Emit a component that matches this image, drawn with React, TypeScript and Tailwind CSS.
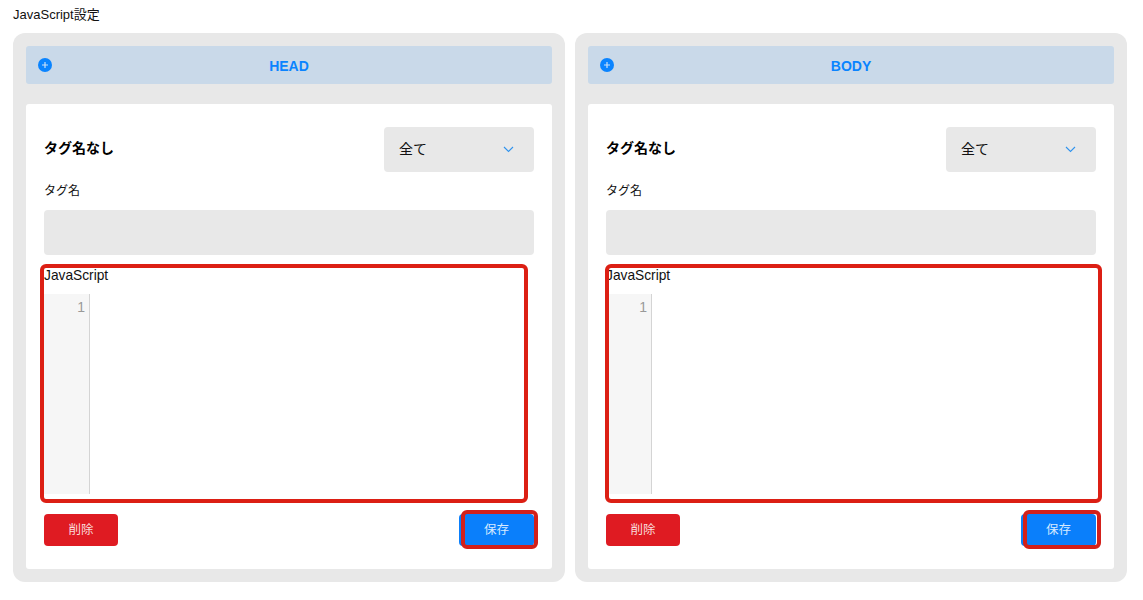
import React from 'react';

const font = { fontFamily: '"Liberation Sans", "Noto Sans CJK JP", sans-serif' };

const Panel = ({ title, codeBoxClass, saveBoxClass }: { title: string; codeBoxClass: string; saveBoxClass: string }) => {
  return (
    <section className="w-[552px] h-[549px] bg-[#e8e8e8] rounded-[12px] px-[13px] pt-[13px]">
      {/* Accordion header */}
      <div className="relative h-[38px] bg-[#c9d9e9] rounded-[3px] flex items-center justify-center">
        <span className="absolute left-[12px] top-[12px] w-[14px] h-[14px] rounded-full bg-[#0a84ff] flex items-center justify-center">
          <svg width="8" height="8" viewBox="0 0 8 8">
            <path d="M4 1v6M1 4h6" stroke="#c9e0f7" strokeWidth="1.2" />
          </svg>
        </span>
        <span className="text-[14px] font-bold text-[#0a84ff] pt-[2px]">{title}</span>
      </div>

      <div className="relative mt-[20px] h-[465px] bg-white rounded-[3px] px-[18px] pt-[23px]">
        <div className="flex items-center justify-between">
          <h2 className="text-[14px] font-bold text-black pb-[2px]">タグ名なし</h2>
          <div className="w-[150px] h-[45px] bg-[#e8e8e8] rounded-[4px] pl-[15px] pr-[20px] flex items-center justify-between">
            <span className="text-[14px] text-[#111]">全て</span>
            <svg width="11" height="7" viewBox="0 0 11 7" fill="none">
              <path d="M1 1l4.5 4.5L10 1" stroke="#2f93ee" strokeWidth="1.1" />
            </svg>
          </div>
        </div>

        <div className="mt-[10px] h-[18px] flex items-center text-[12px] text-[#111]">タグ名</div>
        <div className="mt-[10px] h-[45px] bg-[#e8e8e8] rounded-[4px]"></div>

        <div className="mt-[13px] h-[16px] flex items-center text-[13.75px] text-[#111]">JavaScript</div>
        {/* Code editor */}
        <div className="mt-[10px] h-[200px] flex">
          <div className="w-[46px] bg-[#f6f6f6] border-r border-[#d4d4d4] text-right pr-[4px] pt-[5px] text-[14px] leading-[16px] text-[#999]">1</div>
          <div className="flex-1 bg-white"></div>
        </div>

        <div className="mt-[20px] flex justify-between">
          <button className="w-[74px] h-[32px] bg-[#df1b22] rounded-[4px] text-[12.5px] text-[#f9dcdc]">削除</button>
          <button className="w-[75px] h-[32px] bg-[#0a7ffb] rounded-[4px] text-[12.5px] text-[#d6eaff]">保存</button>
        </div>

        {/* Red annotation frames drawn over the form */}
        <div className={`absolute top-[160px] h-[239px] border-[4px] border-[#dc1f14] rounded-[6px] ${codeBoxClass}`}></div>
        <div className={`absolute top-[406px] h-[39px] border-[4px] border-[#d3201a] rounded-[6px] ${saveBoxClass}`}></div>
      </div>
    </section>
  );
};

export default function App() {
  return (
    <div className="w-[1143px] h-[600px] bg-white overflow-hidden px-[13px] pt-[8px]" style={font}>
      <h1 className="h-[14px] flex items-center text-[13px] text-[#111]">JavaScript設定</h1>
      <div className="mt-[11px] flex gap-[10px]">
        <Panel title="HEAD" codeBoxClass="left-[14px] w-[488px]" saveBoxClass="left-[435px] w-[77px]" />
        <Panel title="BODY" codeBoxClass="left-[17px] w-[497px]" saveBoxClass="left-[435px] w-[78px]" />
      </div>
    </div>
  );
}
